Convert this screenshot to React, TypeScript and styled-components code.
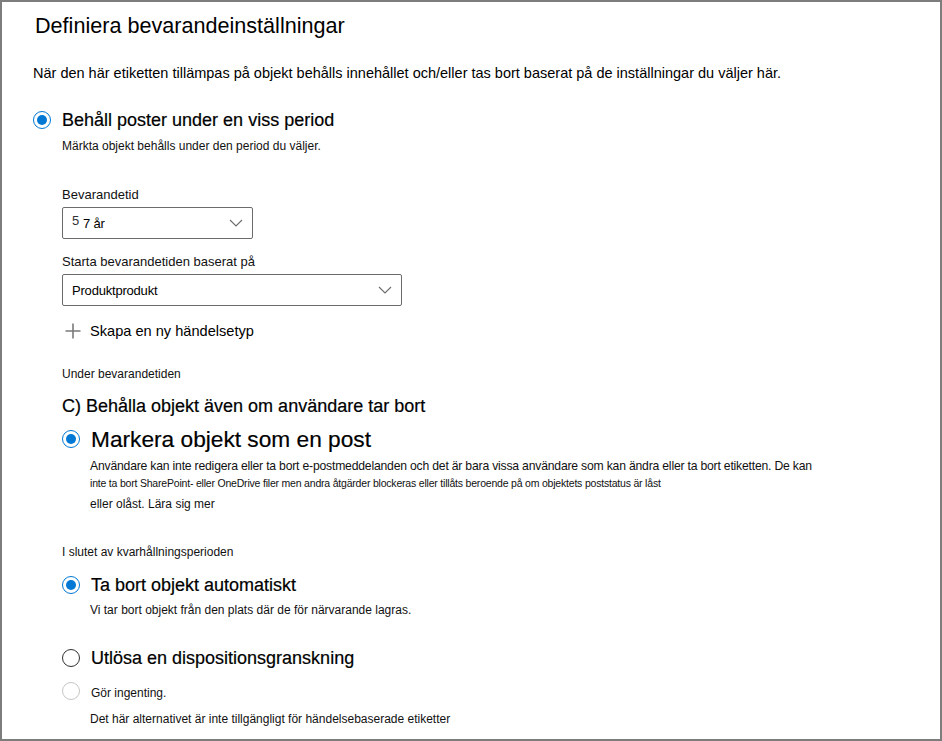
import styled, { createGlobalStyle } from "styled-components";

const GlobalStyle = createGlobalStyle`
  html, body {
    margin: 0;
    padding: 0;
    background: #ffffff;
  }
  body {
    font-family: "Liberation Sans", Arial, sans-serif;
    color: #000000;
  }
`

const Frame = styled.div`
  box-sizing: border-box;
  width: 942px;
  height: 741px;
  border: 2px solid #7d7d7d;
  padding: 12px 0 0 31px;
  display: flex;
  flex-direction: column;
  align-items: flex-start;
`

const Title = styled.h1`
  margin: 0 0 0 2px;
  font-size: 21.6px;
  line-height: 24px;
  font-weight: 400;
`

const Intro = styled.p`
  margin: 26px 0 0 0;
  font-size: 14.5px;
  line-height: 18px;
`

const Indent = styled.div<{ $left: number }>`
  margin-left: ${(p) => p.$left}px;
  display: flex;
  flex-direction: column;
  align-items: flex-start;
`

const Row = styled.label<{ $mt: number; $h: number }>`
  margin-top: ${(p) => p.$mt}px;
  height: ${(p) => p.$h}px;
  display: flex;
  align-items: center;
  gap: 11px;
`

const Radio = styled.span<{ $state: "on" | "off" | "disabled" }>`
  box-sizing: border-box;
  width: 18px;
  height: 18px;
  border-radius: 50%;
  flex: none;
  display: flex;
  align-items: center;
  justify-content: center;
  border: ${(p) =>
    p.$state === "on"
      ? "1.5px solid #0078d4"
      : p.$state === "off"
      ? "1.5px solid #323130"
      : "1px solid #c8c6c4"};

  &::after {
    content: "";
    width: 10px;
    height: 10px;
    border-radius: 50%;
    background: #0078d4;
    display: ${(p) => (p.$state === "on" ? "block" : "none")};
  }
`

const OptionLabel = styled.span<{ $size: number }>`
  font-size: ${(p) => p.$size}px;
  line-height: ${(p) => p.$size + 6}px;
  font-weight: 400;
  -webkit-text-stroke: 0.2px #000;
`

const Small = styled.div<{ $mt: number; $size?: number; $ls?: number }>`
  margin-top: ${(p) => p.$mt}px;
  font-size: ${(p) => p.$size ?? 12}px;
  line-height: 16px;
  letter-spacing: ${(p) => p.$ls ?? 0}px;
  color: #111111;
`

const Heading = styled.div<{ $mt: number }>`
  margin-top: ${(p) => p.$mt}px;
  font-size: 18px;
  line-height: 20px;
  -webkit-text-stroke: 0.2px #000;
`

const Select = styled.div<{ $width: number }>`
  box-sizing: border-box;
  margin-top: 4px;
  width: ${(p) => p.$width}px;
  height: 32px;
  border: 1px solid #6b6b6b;
  border-radius: 2px;
  display: flex;
  align-items: center;
  justify-content: space-between;
  padding: 0 9px 0 9px;
  font-size: 13px;
  letter-spacing: -0.2px;
`

const Sup = styled.span`
  font-size: 13px;
  position: relative;
  top: -3px;
  margin-right: 4px;
  color: #333;
`

const AddLink = styled.div`
  margin-top: 15px;
  height: 20px;
  display: flex;
  align-items: center;
  gap: 9px;
  font-size: 14.6px;
  margin-left: 3px;
`

const Chevron = () => (
  <svg width="14" height="8" viewBox="0 0 14 8">
    <path d="M1 1l6 6 6-6" fill="none" stroke="#6b6b6b" strokeWidth="1.1" />
  </svg>
)

const Plus = () => (
  <svg width="16" height="16" viewBox="0 0 16 16">
    <path d="M8 0.5v15M0.5 8h15" stroke="#7a7a7a" strokeWidth="1.6" />
  </svg>
)

export default function App() {
  return (
    <>
      <GlobalStyle />
      <Frame>
        <Title>Definiera bevarandeinställningar</Title>
        <Intro>
          När den här etiketten tillämpas på objekt behålls innehållet och/eller tas bort baserat på de inställningar du väljer här.
        </Intro>

        <Row $mt={27} $h={22}>
          <Radio $state="on" />
          <OptionLabel $size={18}>Behåll poster under en viss period</OptionLabel>
        </Row>

        <Indent $left={29}>
          <Small $mt={7}>Märkta objekt behålls under den period du väljer.</Small>
          <Small $mt={33} $size={13}>Bevarandetid</Small>
          <Select $width={191}>
            <span>
              <Sup>5</Sup>7 år
            </span>
            <Chevron />
          </Select>
          <Small $mt={15} $size={13}>Starta bevarandetiden baserat på</Small>
          <Select $width={340}>
            <span>Produktprodukt</span>
            <Chevron />
          </Select>
          <AddLink>
            <Plus />
            <span>Skapa en ny händelsetyp</span>
          </AddLink>

          <Small $mt={25}>Under bevarandetiden</Small>
          <Heading $mt={14}>C) Behålla objekt även om användare tar bort</Heading>

          <Row $mt={9} $h={28}>
            <Radio $state="on" />
            <OptionLabel $size={22.7}>Markera objekt som en post</OptionLabel>
          </Row>
          <Indent $left={28}>
            <Small $mt={5} $size={12.2} $ls={-0.2}>
              Användare kan inte redigera eller ta bort e-postmeddelanden och det är bara vissa användare som kan ändra eller ta bort etiketten. De kan
            </Small>
            <Small $mt={1} $size={10.5} $ls={-0.2}>
              inte ta bort SharePoint- eller OneDrive filer men andra åtgärder blockeras eller tillåts beroende på om objektets poststatus är låst
            </Small>
            <Small $mt={5}>eller olåst. Lära sig mer</Small>
          </Indent>

          <Small $mt={32}>I slutet av kvarhållningsperioden</Small>
          <Row $mt={14} $h={22}>
            <Radio $state="on" />
            <OptionLabel $size={18}>Ta bort objekt automatiskt</OptionLabel>
          </Row>
          <Indent $left={28}>
            <Small $mt={6}>Vi tar bort objekt från den plats där de för närvarande lagras.</Small>
          </Indent>

          <Row $mt={29} $h={22}>
            <Radio $state="off" />
            <OptionLabel $size={18}>Utlösa en dispositionsgranskning</OptionLabel>
          </Row>
          <Row $mt={13} $h={18}>
            <Radio $state="disabled" />
            <Small $mt={4}>Gör ingenting.</Small>
          </Row>
          <Indent $left={28}>
            <Small $mt={11}>Det här alternativet är inte tillgängligt för händelsebaserade etiketter</Small>
          </Indent>
        </Indent>
      </Frame>
    </>
  );
}
